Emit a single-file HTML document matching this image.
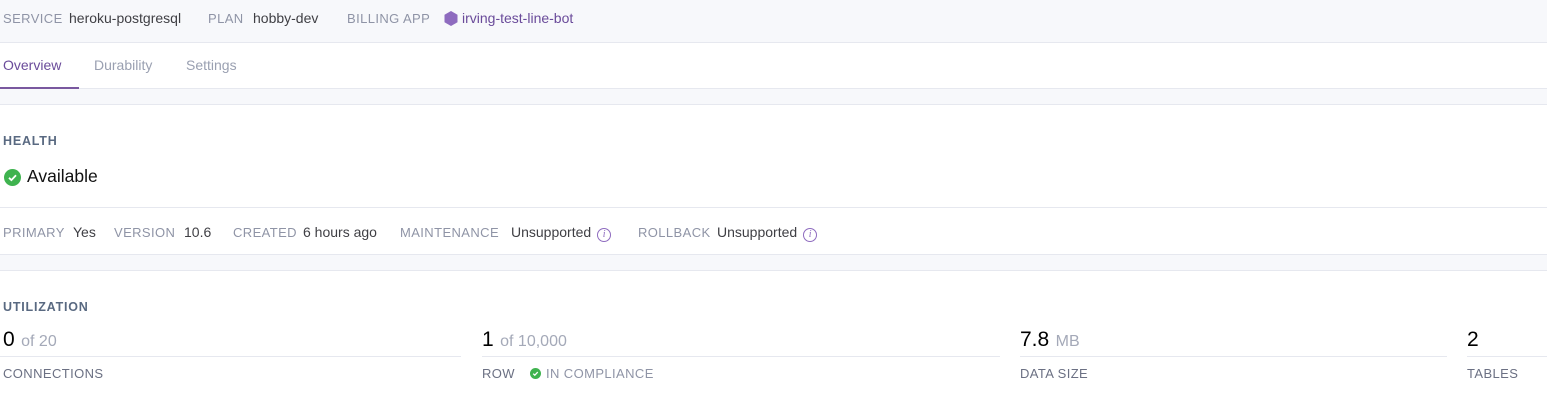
<!DOCTYPE html>
<html><head><style>
body{margin:0;width:1547px;height:412px;overflow:hidden;background:#fff;font-family:"Liberation Sans",sans-serif;position:relative}
.a{position:absolute;white-space:nowrap}
.lbl{color:#8f94a6;font-size:13px;letter-spacing:.4px}
.val{color:#3f3f44;font-size:14px}
.h{color:#596981;font-size:12.5px;font-weight:bold;letter-spacing:.8px}
.big{font-size:21px;color:#000}
.of{font-size:16px;color:#a4a9b8;margin-left:2px}
.ln{position:absolute;height:1px;background:#e6e8ef}
.info{display:inline-block;width:12px;height:12px;border:1px solid #8e6bbf;border-radius:50%;font-size:10px;color:#8e6bbf;text-align:center;line-height:12px;font-style:italic;font-family:"Liberation Serif",serif;vertical-align:0px;margin-left:6px}
</style></head><body>
<div class="a" style="left:0;top:0;width:1547px;height:42px;background:#f7f8fb;border-bottom:1px solid #e6e8ef"></div>
<div class="a lbl" style="left:3px;top:11px">SERVICE</div><div class="a val" style="left:69px;top:10px">heroku-postgresql</div>
<div class="a lbl" style="left:208px;top:11px">PLAN</div><div class="a val" style="left:253px;top:10px">hobby-dev</div>
<div class="a lbl" style="left:347px;top:11px">BILLING APP</div>
<svg class="a" style="left:444px;top:11px" width="14" height="15" viewBox="0 0 14 15"><polygon points="7,0 13.5,3.7 13.5,11.3 7,15 0.5,11.3 0.5,3.7" fill="#8e6bbf"/></svg>
<div class="a val" style="left:462px;top:10px;color:#6a4b9a">irving-test-line-bot</div>
<div class="a" style="left:3px;top:57px;font-size:14px;color:#6a4b9a">Overview</div>
<div class="a" style="left:94px;top:57px;font-size:14px;color:#9aa0b1">Durability</div>
<div class="a" style="left:186px;top:57px;font-size:14px;color:#9aa0b1">Settings</div>
<div class="a" style="left:0;top:88px;width:1547px;height:15px;background:#f7f8fb;border-top:1px solid #e6e8ef;border-bottom:1px solid #e6e8ef"></div>
<div class="a" style="left:0;top:87px;width:79px;height:2px;background:#79589f"></div>
<div class="a h" style="left:3px;top:134px">HEALTH</div>
<svg class="a" style="left:4px;top:169px" width="17" height="17" viewBox="0 0 17 17"><circle cx="8.5" cy="8.5" r="8.5" fill="#3fb34f"/><path d="M5 8.8l2.4 2.3 4.6-4.8" stroke="#fff" stroke-width="1.8" fill="none"/></svg>
<div class="a" style="left:27px;top:166px;font-size:17.5px;color:#111">Available</div>
<div class="ln" style="left:0;top:207px;width:1547px"></div>
<div class="a lbl" style="left:3px;top:225px">PRIMARY</div><div class="a val" style="left:73px;top:224px">Yes</div>
<div class="a lbl" style="left:114px;top:225px">VERSION</div><div class="a val" style="left:184px;top:224px">10.6</div>
<div class="a lbl" style="left:233px;top:225px">CREATED</div><div class="a val" style="left:303px;top:224px">6 hours ago</div>
<div class="a lbl" style="left:400px;top:225px">MAINTENANCE</div><div class="a val" style="left:511px;top:224px">Unsupported<span class="info">i</span></div>
<div class="a lbl" style="left:638px;top:225px">ROLLBACK</div><div class="a val" style="left:717px;top:224px">Unsupported<span class="info">i</span></div>
<div class="a" style="left:0;top:254px;width:1547px;height:15px;background:#f7f8fb;border-top:1px solid #e6e8ef;border-bottom:1px solid #e6e8ef"></div>
<div class="a h" style="left:3px;top:300px">UTILIZATION</div>
<div class="a" style="left:3px;top:328px"><span class="big">0</span> <span class="of">of 20</span></div>
<div class="ln" style="left:0;top:356px;width:461px"></div>
<div class="a lbl" style="left:3px;top:366px;color:#6b7083">CONNECTIONS</div>
<div class="a" style="left:482px;top:328px"><span class="big">1</span> <span class="of">of 10,000</span></div>
<div class="ln" style="left:482px;top:356px;width:518px"></div>
<div class="a lbl" style="left:482px;top:366px;color:#6b7083">ROW</div>
<svg class="a" style="left:530px;top:368px" width="11" height="11" viewBox="0 0 17 17"><circle cx="8.5" cy="8.5" r="8.5" fill="#3fb34f"/><path d="M5 8.8l2.4 2.3 4.6-4.8" stroke="#fff" stroke-width="2" fill="none"/></svg>
<div class="a lbl" style="left:546px;top:366px">IN COMPLIANCE</div>
<div class="a" style="left:1020px;top:328px"><span class="big">7.8</span> <span class="of">MB</span></div>
<div class="ln" style="left:1020px;top:356px;width:427px"></div>
<div class="a lbl" style="left:1020px;top:366px;color:#6b7083">DATA SIZE</div>
<div class="a" style="left:1467px;top:328px"><span class="big">2</span></div>
<div class="ln" style="left:1467px;top:356px;width:80px"></div>
<div class="a lbl" style="left:1467px;top:366px;color:#6b7083">TABLES</div>
</body></html>
